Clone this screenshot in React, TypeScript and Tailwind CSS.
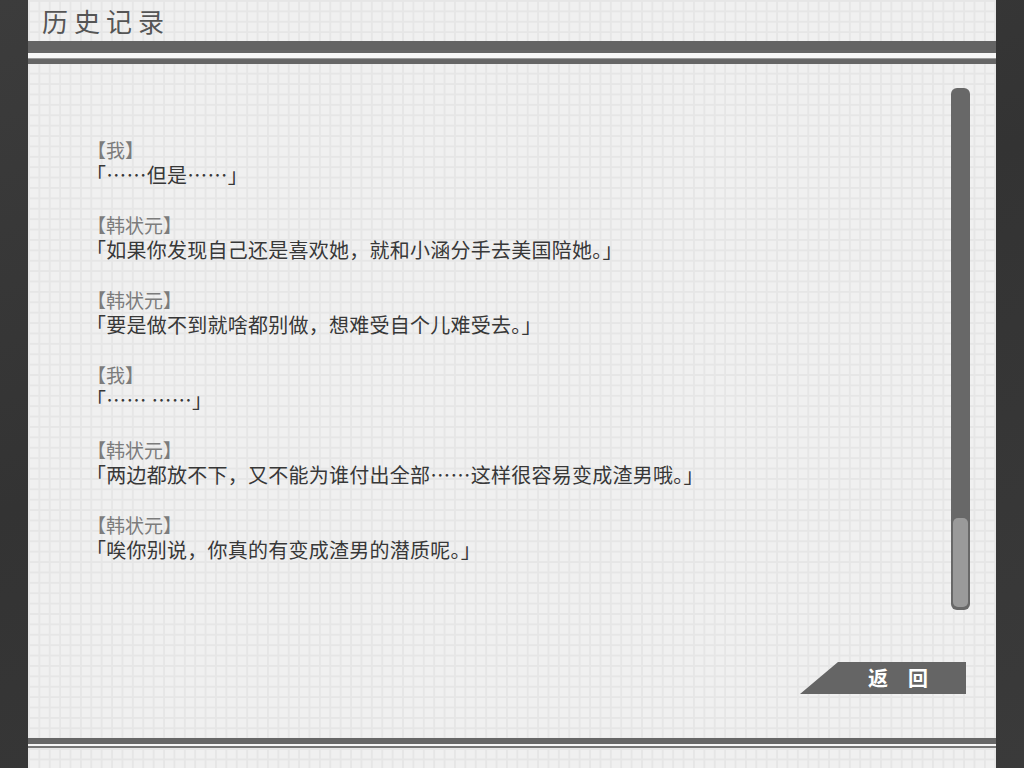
import type { ReactNode } from 'react';

interface LogEntry {
  speaker: string;
  line: string;
}

// 对话记录，按时间顺序排列
const LOG: LogEntry[] = [
  { speaker: '【我】', line: '「……但是……」' },
  { speaker: '【韩状元】', line: '「如果你发现自己还是喜欢她，就和小涵分手去美国陪她。」' },
  { speaker: '【韩状元】', line: '「要是做不到就啥都别做，想难受自个儿难受去。」' },
  { speaker: '【我】', line: '「…… ……」' },
  { speaker: '【韩状元】', line: '「两边都放不下，又不能为谁付出全部……这样很容易变成渣男哦。」' },
  { speaker: '【韩状元】', line: '「唉你别说，你真的有变成渣男的潜质呢。」' },
];

const FONT = "font-['Noto_Sans_CJK_SC','Noto_Sans',sans-serif]";

function Entry({ speaker, line }: LogEntry) {
  return (
    <div className="flex flex-col">
      <span className="text-[19px] leading-[25px] text-[#7c7c7c] ml-[1px]">{speaker}</span>
      <span className="text-[20px] leading-[25px] tracking-[0.25px] text-[#383838]">{line}</span>
    </div>
  );
}

// 右侧滚动条：深色轨道 + 浅色滑块（已滚动到底部）
function ScrollBar() {
  return (
    <div className="w-[19px] h-full rounded-[6px] bg-[#686868] flex flex-col justify-end p-[2px] pb-[3px]">
      <div className="h-[89px] rounded-[5px] bg-[#9a9a9a]" />
    </div>
  );
}

function BackButton({ children }: { children: ReactNode }) {
  return (
    <button
      type="button"
      className="w-[166px] h-[32px] bg-[#656565] [clip-path:polygon(38px_0,100%_0,100%_100%,0_100%)] flex items-center justify-end pr-[38px] gap-[20px] text-[20px] font-bold text-white leading-none"
    >
      {children}
    </button>
  );
}

export default function App() {
  return (
    <div className={`w-[1024px] h-[768px] overflow-hidden bg-[linear-gradient(160deg,#3c3c3c,#333_45%,#3a3a3a)] flex ${FONT}`}>
      <div className="ml-[28px] w-[968px] h-full flex flex-col bg-[#f0f0f0] bg-[linear-gradient(to_right,#e6e6e6_2px,transparent_2px),linear-gradient(to_bottom,#e6e6e6_2px,transparent_2px)] bg-size-[10.4px_10.4px]">
        {/* 标题栏 */}
        <div className="h-[41px] flex items-center pl-[14px]">
          <h1 className="text-[26px] leading-none tracking-[6px] text-[#555]">历史记录</h1>
        </div>
        <div className="h-[12px] bg-[#646464]" />
        <div className="h-[5px] bg-[#f6f6f6]" />
        <div className="h-[6px] bg-[#666] border-t border-[#9a9a9a]" />

        {/* 记录列表 */}
        <div className="flex-1 flex flex-col pt-[24px]">
          <div className="h-[522px] flex">
            <div className="flex-1 pl-[58px] pt-[49px] flex flex-col gap-[25px]">
              {LOG.map((e, i) => (
                <Entry key={i} speaker={e.speaker} line={e.line} />
              ))}
            </div>
            <div className="pr-[26px]">
              <ScrollBar />
            </div>
          </div>
          <div className="mt-[52px] flex justify-end pr-[30px]">
            <BackButton>
              <span>返</span>
              <span>回</span>
            </BackButton>
          </div>
        </div>

        {/* 底部分隔线 */}
        <div className="h-[6px] bg-[#666]" />
        <div className="h-[2px] bg-[#f6f6f6]" />
        <div className="h-[2px] bg-[#777]" />
        <div className="h-[20px]" />
      </div>
    </div>
  );
}
